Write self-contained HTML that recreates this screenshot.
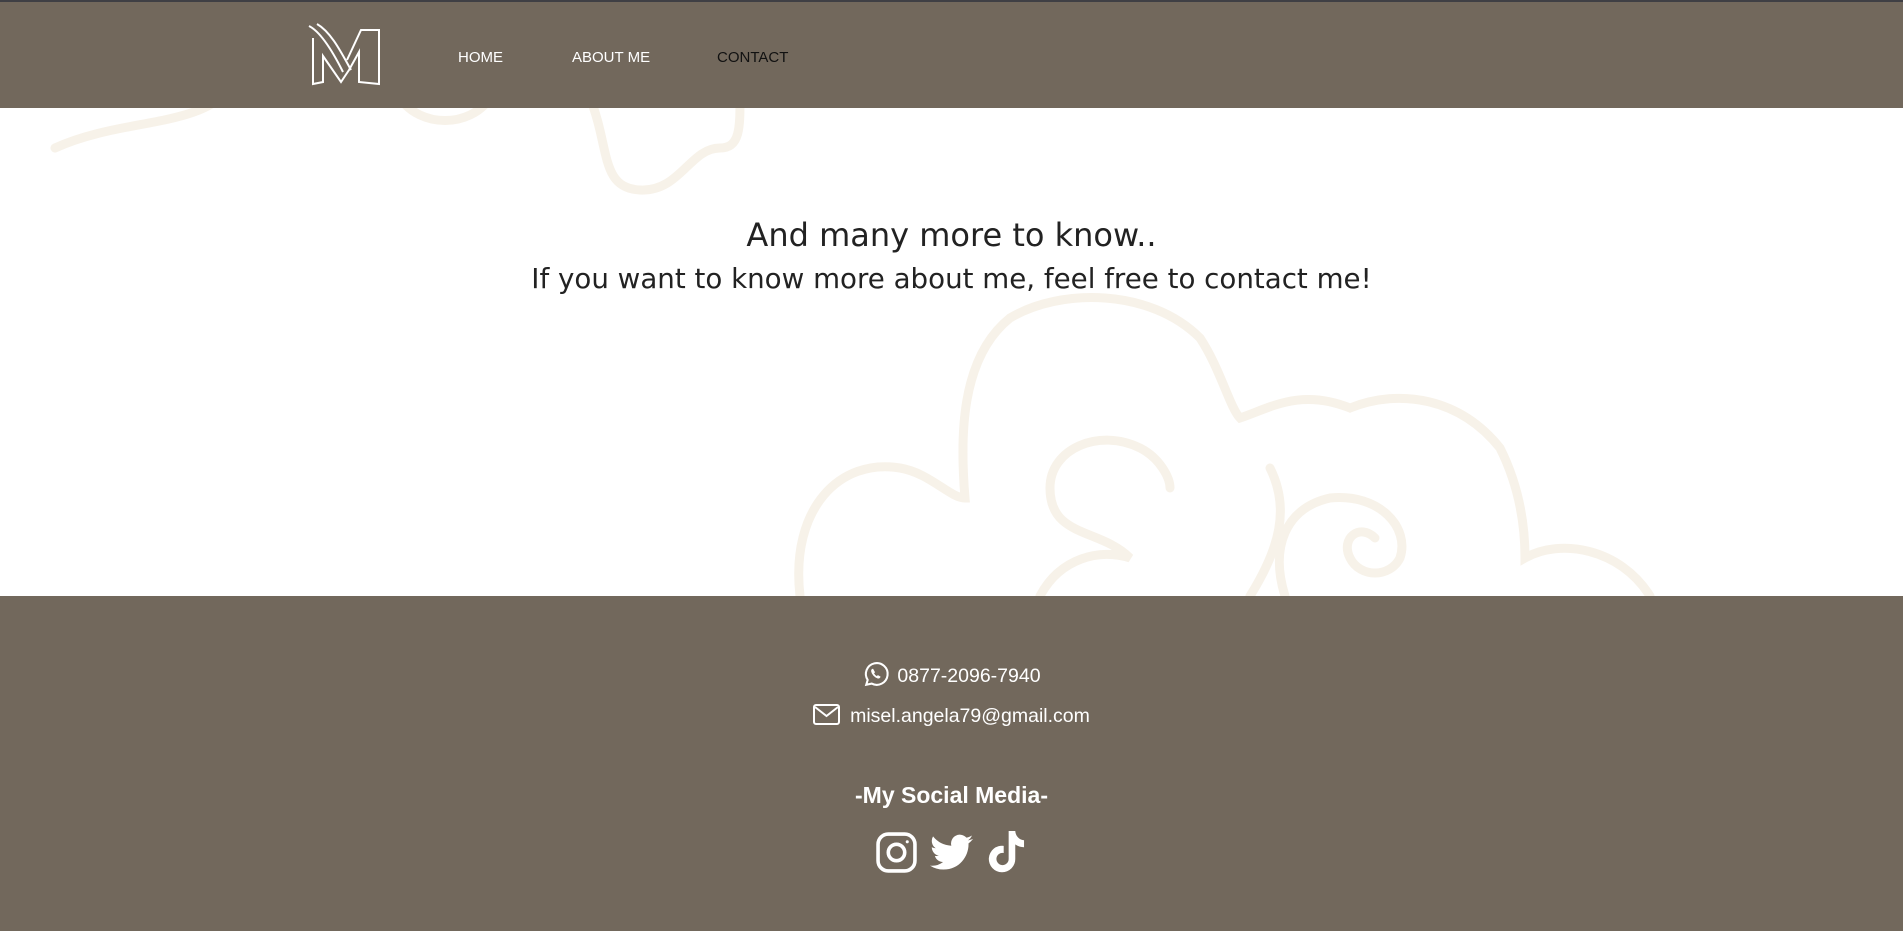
<!DOCTYPE html>
<html><head><meta charset="utf-8"><style>
*{margin:0;padding:0;box-sizing:border-box}
body{width:1903px;height:931px;overflow:hidden;background:#fff;font-family:"Liberation Sans",sans-serif;position:relative}
.hdr{position:absolute;left:0;top:0;width:1903px;height:108px;background:#72685c;border-top:2px solid #3f3f44}
.nav{position:absolute;top:47px;font-size:15px;color:#fff}
.main{position:absolute;top:108px;left:0;width:1903px;height:488px;overflow:hidden}
.h1{position:absolute;width:1903px;text-align:center;font-size:32px;color:#222;font-family:"DejaVu Sans",sans-serif}
.h2{position:absolute;width:1903px;text-align:center;font-size:27.7px;color:#222;font-family:"DejaVu Sans",sans-serif}
.ftr{position:absolute;top:596px;left:0;width:1903px;height:335px;background:#72685c;color:#fff}
.ln{position:absolute;width:1903px;text-align:center;font-size:19.5px}
</style></head><body>
<div class="main">
<svg width="1903" height="488" style="position:absolute;left:0;top:0" fill="none" stroke="#f7f2e9" stroke-width="9" stroke-linecap="round">
<path d="M55 40 C120 10 200 20 230 -20"/>
<path d="M400 -10 C420 20 470 20 490 -10"/>
<path d="M590 -10 C610 40 600 80 640 82 C680 84 690 40 720 40 C740 40 740 20 740 -10"/>
<path d="M800 488 C790 400 840 350 900 360 C930 365 950 390 965 390 C960 330 960 250 1010 210 C1060 180 1150 180 1200 230 C1220 260 1230 300 1240 310 C1270 300 1300 280 1350 300 C1400 280 1460 290 1500 340 C1520 380 1525 420 1525 450 C1560 430 1620 440 1650 488"/>
<path d="M1040 488 C1060 450 1100 440 1130 450 C1100 420 1050 430 1050 380 C1050 340 1100 320 1140 340 C1160 350 1170 370 1170 380"/>
<path d="M1285 488 C1270 440 1285 400 1330 390 C1380 385 1410 420 1400 450 C1390 470 1360 470 1350 450 C1340 430 1360 415 1375 430"/>
<path d="M1270 360 C1290 400 1280 440 1250 488"/>
</svg>
<div class="h1" style="top:108px">And many more to know..</div>
<div class="h2" style="top:154px">If you want to know more about me, feel free to contact me!</div>
</div>
<div class="hdr">
<svg style="position:absolute;left:303px;top:20px" width="82" height="68" viewBox="0 0 82 68" fill="none" stroke="#fff" stroke-width="2">
<path d="M6 4 C18 10 30 30 40 50"/>
<path d="M14 2 C28 10 38 30 48 48"/>
<path d="M10 16 L10 62 L20 60 L20 34 L38 60 L46 48 L56 30 L56 60 L76 62 L76 8 L58 8 L44 38"/>
</svg>
<div class="nav" style="left:458px">HOME</div>
<div class="nav" style="left:572px">ABOUT ME</div>
<div class="nav" style="left:717px;color:#111">CONTACT</div>
</div>
<div class="ftr">
<div class="ln" style="top:64px"><svg width="29" height="29" viewBox="0 0 24 24" style="vertical-align:-7px;margin-right:6px" fill="none" stroke="#fff" stroke-width="1.7"><path d="M3.5 20.5l1.2-4A9 9 0 1 1 8 19.5z"/><path d="M9 7.5c-.8 0-1.3 1-1.1 2 .4 2.2 2.6 4.6 5 5.4 1 .3 2-.2 2.1-1l-1.8-1-.9.8c-1.2-.6-2.2-1.6-2.7-2.7l.8-.9z" fill="#fff" stroke-width=".6"/></svg>0877-2096-7940</div>
<div class="ln" style="top:108px"><svg width="27" height="21" viewBox="0 0 27 21" style="vertical-align:-3px;margin-right:10px" fill="none" stroke="#fff" stroke-width="2"><rect x="1" y="1" width="25" height="19" rx="2"/><path d="M2 3l11.5 9L25 3"/></svg>misel.angela79@gmail.com</div>
<div class="ln" style="top:186px;font-size:23px;font-weight:bold">-My Social Media-</div>
<svg style="position:absolute;left:876px;top:236px" width="41" height="41" viewBox="0 0 40 40" fill="none" stroke="#fff" stroke-width="3.5"><rect x="2" y="2" width="36" height="36" rx="10"/><circle cx="20" cy="20" r="8"/><circle cx="30.5" cy="9.5" r="1.5" fill="#fff" stroke="none"/></svg>
<svg style="position:absolute;left:930px;top:238px" width="43" height="37" viewBox="0 0 24 20" fill="#fff"><path d="M24 2.4c-.9.4-1.8.7-2.8.8 1-.6 1.8-1.6 2.2-2.7-1 .6-2 1-3.1 1.2A4.9 4.9 0 0 0 11.9 6.200 14 14 0 0 1 1.7 1 4.9 4.9 0 0 0 3.2 7.6c-.8 0-1.6-.2-2.2-.6 0 2.4 1.7 4.4 3.9 4.8-.7.2-1.5.2-2.2.1.6 2 2.4 3.4 4.6 3.4A9.9 9.9 0 0 1 0 17.3 14 14 0 0 0 7.5 19.5c9.1 0 14-7.5 14-14v-.6c1-.7 1.8-1.600 2.5-2.5z"/></svg>
<svg style="position:absolute;left:987px;top:235px" width="40" height="43" viewBox="0 0 24 26" fill="#fff"><path d="M13 0h4c.2 3 2.3 5.4 5.3 5.6v4.2c-2 0-3.8-.6-5.3-1.7v8.5A8 8 0 1 1 10 9v4.3a3.7 3.7 0 1 0 3 3.6z"/></svg>
</div>
</body></html>
